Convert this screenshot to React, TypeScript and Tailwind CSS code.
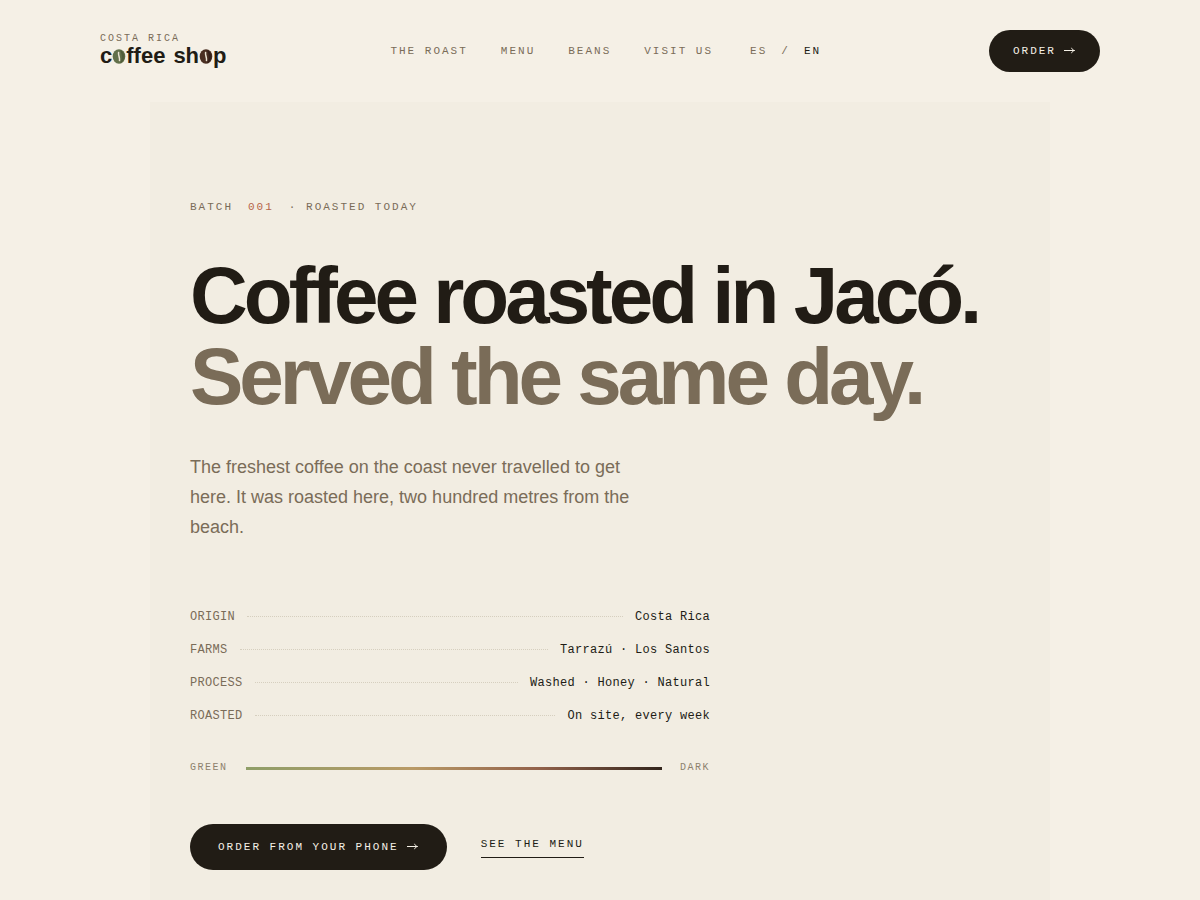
import React from "react";

const navLinks = [
  { label: "THE ROAST", href: "#roast" },
  { label: "MENU", href: "#menu" },
  { label: "BEANS", href: "#beans" },
  { label: "VISIT US", href: "#visit" },
];

const specs = [
  { label: "ORIGIN", value: "Costa Rica" },
  { label: "FARMS", value: "Tarrazú · Los Santos" },
  { label: "PROCESS", value: "Washed · Honey · Natural" },
  { label: "ROASTED", value: "On site, every week" },
];

const Bean: React.FC<{ color: string; shade: string }> = ({ color, shade }) => (
  <svg viewBox="0 0 14 15" className="mb-px h-[15px] w-[14px] self-end" aria-hidden="true">
    <ellipse cx="7" cy="7.5" rx="6.3" ry="7.3" fill={color} />
    <path d="M7.600 1C10.500 5 10.500 10 8 14.400C14 12 14 2.500 7.600 1Z" fill={shade} />
    <path d="M6.600 3.500C6 6.500 8 8 7.500 11.500" fill="none" stroke="#e9e3d2" strokeWidth="1.500" strokeLinecap="round" />
  </svg>
);

const Arrow = () => (
  <svg viewBox="0 0 12 8" className="h-2 w-3" fill="none" stroke="currentColor" strokeWidth="1" aria-hidden="true">
    <path d="M0 3.500H10.500M7.500 0.800C8.100 2.400 9.100 3.200 10.500 3.500C9.100 3.800 8.100 4.600 7.500 6.200" />
  </svg>
);

const Logo = () => (
  <a href="#top" className="flex flex-col gap-[3px] pb-[3px] text-[#211c15]">
    <span className="font-['Liberation_Mono',monospace] text-[10px] leading-[10px] tracking-[2px] text-[#7a6c58]">COSTA RICA</span>
    <span className="flex text-[22px] leading-[18px] font-bold">
      <span>c</span>
      <Bean color="#62704a" shade="#4f5d3a" />
      <span>ffee</span>
      <span className="ml-2">sh</span>
      <Bean color="#4a2f22" shade="#33201a" />
      <span>p</span>
    </span>
  </a>
);

const Header = () => (
  <header className="mx-auto flex max-w-[1000px] items-center justify-between py-[30px]">
    <Logo />
    <nav className="mr-1 flex items-center gap-[33px] font-['Liberation_Mono',monospace] text-[11px] tracking-[2px] text-[#7a6c58]">
      {navLinks.map((link) => (
        <a key={link.label} href={link.href}>{link.label}</a>
      ))}
      <div className="ml-1 flex gap-3.5">
        <button type="button">ES</button>
        <span>/</span>
        <button type="button" className="text-[#211c15]">EN</button>
      </div>
    </nav>
    <button type="button" className="flex h-[42px] items-center gap-2 rounded-full bg-[#211c15] px-6 font-['Liberation_Mono',monospace] text-[11px] tracking-[2px] text-[#f5f0e6]">
      ORDER <Arrow />
    </button>
  </header>
);

const Hero = () => (
  <main className="mx-auto max-w-[900px] bg-[#f2ede2] px-10 pt-[97px] pb-[30px]">
    <p className="flex gap-[15px] font-['Liberation_Mono',monospace] text-[11px] leading-4 tracking-[2px] text-[#7a6c58]">
      <span>BATCH</span>
      <span className="text-[#b5654a]">001</span>
      <span>· ROASTED TODAY</span>
    </p>

    <h1 className="mt-10 text-[80px] leading-[81px] font-bold tracking-tighter text-[#211c15]">
      Coffee roasted in Jacó.
      <span className="block text-[#7a6c58]">Served the same day.</span>
    </h1>

    <p className="mt-[35px] max-w-[450px] text-lg leading-[30px] text-[#7a6c58]">
      The freshest coffee on the coast never travelled to get here. It was roasted here, two hundred metres from the beach.
    </p>

    <dl className="mt-[58px] flex max-w-[520px] flex-col font-['Liberation_Mono',monospace] text-xs tracking-wide">
      {specs.map((spec) => (
        <div key={spec.label} className="flex h-[33px] items-center gap-3">
          <dt className="text-[#7a6c58]">{spec.label}</dt>
          <dd className="order-last text-[#211c15]">{spec.value}</dd>
          <span className="flex-1 border-b border-dotted border-[#d6cfbf]" />
        </div>
      ))}
    </dl>

    <div className="mt-7 flex max-w-[520px] items-center gap-[18px] font-['Liberation_Mono',monospace] text-[10px] leading-4 tracking-[0.15em] text-[#8d816d]">
      <span>GREEN</span>
      <span className="h-[3px] flex-1 bg-[linear-gradient(90deg,#8f9e68_0%,#b99a66_40%,#93624a_70%,#33251c_100%)]" />
      <span>DARK</span>
    </div>

    <div className="mt-12 flex items-center gap-[34px] font-['Liberation_Mono',monospace] text-[11px] tracking-[2px]">
      <button type="button" className="flex h-[46px] items-center gap-2 rounded-full bg-[#211c15] px-7 text-[#f5f0e6]">
        ORDER FROM YOUR PHONE <Arrow />
      </button>
      <a href="#menu" className="border-b border-[#211c15] pb-1 text-[#211c15]">SEE THE MENU</a>
    </div>
  </main>
);

export default function App() {
  return (
    <div id="top" className="min-h-screen bg-[#f5f0e6] font-['Liberation_Sans',sans-serif]">
      <Header />
      <Hero />
    </div>
  );
}
